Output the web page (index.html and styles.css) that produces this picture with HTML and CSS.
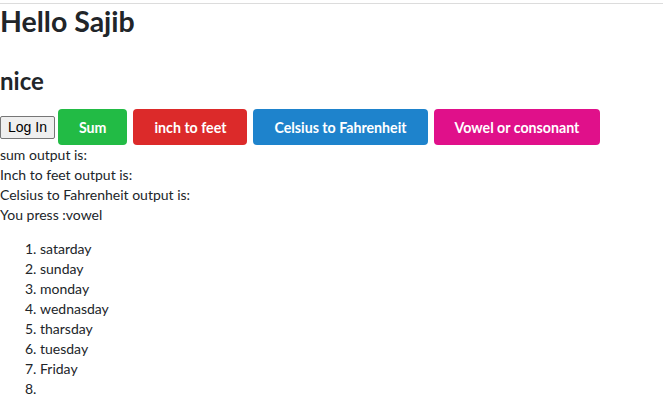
FILE: index.html
```html
<!DOCTYPE html>
<html>
<head>
<meta charset="utf-8">
<link rel="stylesheet" href="styles.css">
</head>
<body>
<div class="rule"></div>
<h1 class="title">Hello Sajib</h1>
<h2 class="subtitle">nice</h2>
<div class="actions">
  <button class="login">Log In</button>
  <button class="btn btn-green">Sum</button>
  <button class="btn btn-red">inch to feet</button>
  <button class="btn btn-blue">Celsius to Fahrenheit</button>
  <button class="btn btn-pink">Vowel or consonant</button>
</div>
<div class="outputs">
  <div>sum output is:</div>
  <div>Inch to feet output is:</div>
  <div>Celsius to Fahrenheit output is:</div>
  <div>You press :vowel</div>
</div>
<ol class="days">
  <li>satarday</li>
  <li>sunday</li>
  <li>monday</li>
  <li>wednasday</li>
  <li>tharsday</li>
  <li>tuesday</li>
  <li>Friday</li>
  <li></li>
</ol>
</body>
</html>
```
FILE: styles.css
```css
html, body {
  margin: 0;
  padding: 0;
  background: #fff;
}
body {
  font-family: Lato, "Noto Sans", sans-serif;
  font-size: 14px;
  line-height: 20px;
  color: #212529;
  padding-top: 3px;
}
.rule {
  border-top: 1px solid #dcdcdc;
}
.title {
  margin: 0;
  font-size: 28.5px;
  line-height: 34px;
  font-weight: 700;
}
.subtitle {
  margin: 28px 0 0;
  font-size: 24px;
  line-height: 29px;
  font-weight: 700;
}
.actions {
  display: flex;
  align-items: center;
  margin-top: 14px;
  height: 36px;
}
.login {
  font-family: "Liberation Sans", Arial, sans-serif;
  font-size: 14px;
  height: 23px;
  padding: 0 7px;
  border: 1px solid #767676;
  border-radius: 2px;
  background: #efefef;
  color: #000;
  margin-right: 3px;
}
.btn {
  height: 36px;
  padding: 0 21px;
  border: none;
  border-radius: 4px;
  color: #fff;
  font-family: Lato, "Noto Sans", sans-serif;
  font-size: 14.2px;
  font-weight: 700;
  margin-right: 6px;
}
.btn-green { background: #22bb45; }
.btn-red { background: #dc2a2a; }
.btn-blue { background: #1e83cc; }
.btn-pink { background: #e0108a; }
.days {
  margin: 14px 0 0;
  padding-left: 40px;
}
```
